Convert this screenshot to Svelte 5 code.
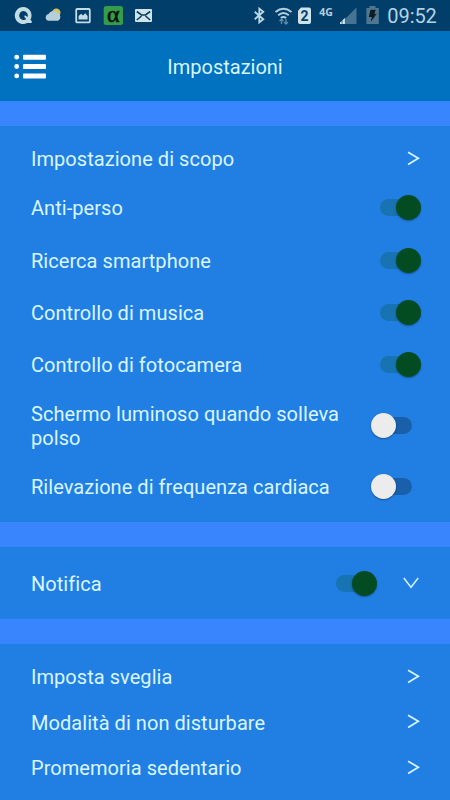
<script lang="ts">
	type Row = { label: string; on?: boolean; tall?: boolean }

	let main: Row[] = $state([
		{ label: 'Anti-perso', on: true },
		{ label: 'Ricerca smartphone', on: true },
		{ label: 'Controllo di musica', on: true },
		{ label: 'Controllo di fotocamera', on: true },
		{ label: 'Schermo luminoso quando solleva polso', on: false, tall: true },
		{ label: 'Rilevazione di frequenza cardiaca', on: false }
	])
	let notify: Row = $state({ label: 'Notifica', on: true })
	const links = ['Imposta sveglia', 'Modalità di non disturbare', 'Promemoria sedentario']
</script>

{#snippet toggle(row: Row)}
	<button
		type="button"
		class="switch"
		class:on={row.on}
		role="switch"
		aria-checked={row.on}
		aria-label={row.label}
		onclick={() => (row.on = !row.on)}
	>
		<span class="track"></span>
		<span class="thumb"></span>
	</button>
{/snippet}

{#snippet link(label: string)}
	<div class="row link">
		<span class="label">{label}</span>
		<svg class="chevron" width="13" height="16" viewBox="0 0 13 16">
			<path d="M1.1 1.2 11.3 7.3 1.1 13.4" />
		</svg>
	</div>
{/snippet}

<div class="screen">
	<div class="status">
		<svg width="160" height="31" viewBox="0 0 160 31">
			<path fill="#c3dbe3" fill-rule="evenodd" d="M23.3 7a8.5 8.5 0 1 0 3.8 16.1h4.6v-2.2l-1.3-1.1A8.5 8.5 0 0 0 23.3 7Zm0 4a4.5 4.5 0 0 1 4.3 6l-2.6-1.8-.8 1.3 2 2.7A4.5 4.5 0 1 1 23.3 11Z" />
			<circle cx="56.3" cy="12.8" r="4.2" fill="#d5c65e" />
			<path fill="#b7cfda" d="M48.2 20.8a3.5 3.5 0 0 1 .3-6.8 5.2 5.2 0 0 1 9-.8 4.1 4.1 0 0 1 .6 7.6Z" />
			<rect x="76.2" y="9" width="13.6" height="13.4" rx="1" fill="none" stroke="#c3dbe3" stroke-width="1.8" />
			<path fill="#c3dbe3" d="M78.6 19.5V16l2.5-2.3 1.9 1.8 2.2-2.2 2.4 2.7v3.5Z" />
			<rect x="103.7" y="6" width="19.3" height="19" rx="2.5" fill="#359c4b" />
			<text class="alpha" x="113.3" y="22" text-anchor="middle">α</text>
			<rect x="135" y="9" width="17" height="13" rx="1" fill="#d2e3e9" />
			<path fill="none" stroke="#073f66" stroke-width="1.6" d="m136.8 11.5 4.7 3.5h4l4.7-3.5M136.8 20l4.7-4M150.2 20l-4.7-4" />
		</svg>
		<svg width="210" height="31" viewBox="240 0 210 31">
			<path fill="none" stroke="#bdd7e3" stroke-width="1.8" d="m254.7 11.8 8.6 7.5-4 3.2V8.6l4 3.2-8.6 7.5" />
			<g fill="none" stroke="#b4d0de" stroke-width="1.9">
				<path d="M275.5 12q8-6.5 16 0" />
				<path d="M278.2 15.2q5.3-4.6 10.6 0" />
				<path d="M280.8 18q2.7-2.2 5.4 0" />
			</g>
			<path fill="none" stroke="#5d8aa6" stroke-width="1.4" d="M281.5 24v-5m-2 2 2-2 2 2M286 19v5m-2-2 2 2 2-2" />
			<path fill="#cfe3ea" d="M301 7.5h8q2 0 2 2v12.5q0 2-2 2h-9q-2 0-2-2V10.7Z" />
			<text class="sim" x="304.6" y="21" text-anchor="middle">2</text>
			<text class="net" x="319.3" y="15.6">4G</text>
			<path fill="#457592" d="M356.5 7.5V24H340Z" />
			<path fill="#cfe3ea" d="M340 24v-1.5l1.7-1.5v3ZM342.5 24v-3.8l2.4-2.4V24Z" />
			<path fill="#4d7890" d="M369.5 6h6v2h3.3v16h-12.4V8h3.1Z" />
			<path fill="#101c22" d="m370.5 9.8 5.2-.1-1.3 4.3 2.3-.3-6 8.3 1.1-5.1-3 .2Z" />
			<text class="clock" x="387.3" y="23" textLength="49.5">09:52</text>
		</svg>
	</div>

	<header>
		<svg class="menu" width="34" height="26" viewBox="0 0 34 26">
			<g fill="#fff">
				<circle cx="2.7" cy="3.2" r="2.4" /><rect x="9" y=".7" width="23" height="5" rx="1" />
				<circle cx="2.7" cy="12.5" r="2.4" /><rect x="9" y="10" width="23" height="5" rx="1" />
				<circle cx="2.7" cy="21.9" r="2.4" /><rect x="9" y="19.4" width="23" height="5" rx="1" />
			</g>
		</svg>
		<h1>Impostazioni</h1>
	</header>

	<section class="card">
		{@render link('Impostazione di scopo')}
		{#each main as row}
			<div class="row" class:tall={row.tall}>
				<span class="label">{row.label}</span>
				{@render toggle(row)}
			</div>
		{/each}
	</section>

	<section class="card notify">
		<div class="row">
			<span class="label">{notify.label}</span>
			{@render toggle(notify)}
			<svg class="chevron down" width="16" height="12" viewBox="0 0 16 12">
				<path d="m.8 1 7.2 9.3L15.2 1" />
			</svg>
		</div>
	</section>

	<section class="card last">
		{#each links as label}
			{@render link(label)}
		{/each}
	</section>
</div>

<style>
	:global(body) {
		margin: 0;
		background: #3885fd;
	}

	.screen {
		width: 450px;
		height: 800px;
		overflow: hidden;
		display: flex;
		flex-direction: column;
		background: #3885fd;
		color: #d9f6ff;
		font-family: Roboto, sans-serif;
		font-size: 20px;
	}

	.status {
		height: 31px;
		flex: none;
		display: flex;
		justify-content: space-between;
		background: #023e6a;
	}

	.alpha {
		font: 24px 'Liberation Serif', serif;
		fill: #06140a;
		stroke: #06140a;
		stroke-width: 0.6;
	}

	.sim {
		font-size: 14px;
		font-weight: 700;
		fill: #073f66;
	}

	.net {
		font: 700 10.5px 'Open Sans', sans-serif;
		fill: #b4d0de;
	}

	.clock {
		font-size: 20px;
		fill: #b4d3e2;
	}

	header {
		height: 70px;
		flex: none;
		box-sizing: border-box;
		padding-top: 2px;
		display: grid;
		grid-template-columns: 60px 1fr 60px;
		align-items: center;
		background: #0072bf;
	}

	.menu {
		margin-left: 14px;
	}

	h1 {
		margin: 0;
		font-size: 20px;
		font-weight: 400;
		text-align: center;
	}

	.card {
		flex: none;
		box-sizing: border-box;
		margin-top: 25px;
		padding: 10px 29px 8.4px 31px;
		background: #217fe3;
	}

	.row {
		display: flex;
		align-items: center;
		height: 52.4px;
	}

	.row.link {
		height: 45.6px;
	}

	.row.tall {
		height: 69.6px;
	}

	.label {
		flex: 1;
		padding: 1px 20px 0 0;
		line-height: 24px;
		letter-spacing: 0.05px;
	}

	.switch {
		display: grid;
		align-items: center;
		width: 50.5px;
		height: 26px;
		padding: 0;
		border: 0;
		background: none;
	}

	.track,
	.thumb {
		grid-area: 1 / 1;
	}

	.track {
		height: 17px;
		margin: 0 9.5px;
		border-radius: 9px;
		background: #195fa9;
	}

	.thumb {
		width: 25px;
		height: 25px;
		border-radius: 50%;
		background: #ececec;
		box-shadow: 0 1px 2px rgba(0, 0, 0, 0.35);
	}

	.on .track {
		background: #1773b1;
	}

	.on .thumb {
		justify-self: end;
		background: #034c22;
	}

	.chevron {
		margin-right: 1px;
		fill: none;
		stroke: #d9f6ff;
		stroke-width: 1.7;
	}

	.chevron.down {
		margin: 0 2px 0 26px;
		stroke-width: 1.4;
	}

	.notify {
		height: 72px;
		padding-top: 10.5px;
	}

	.last {
		flex: 1;
		padding-top: 10.3px;
	}
</style>
